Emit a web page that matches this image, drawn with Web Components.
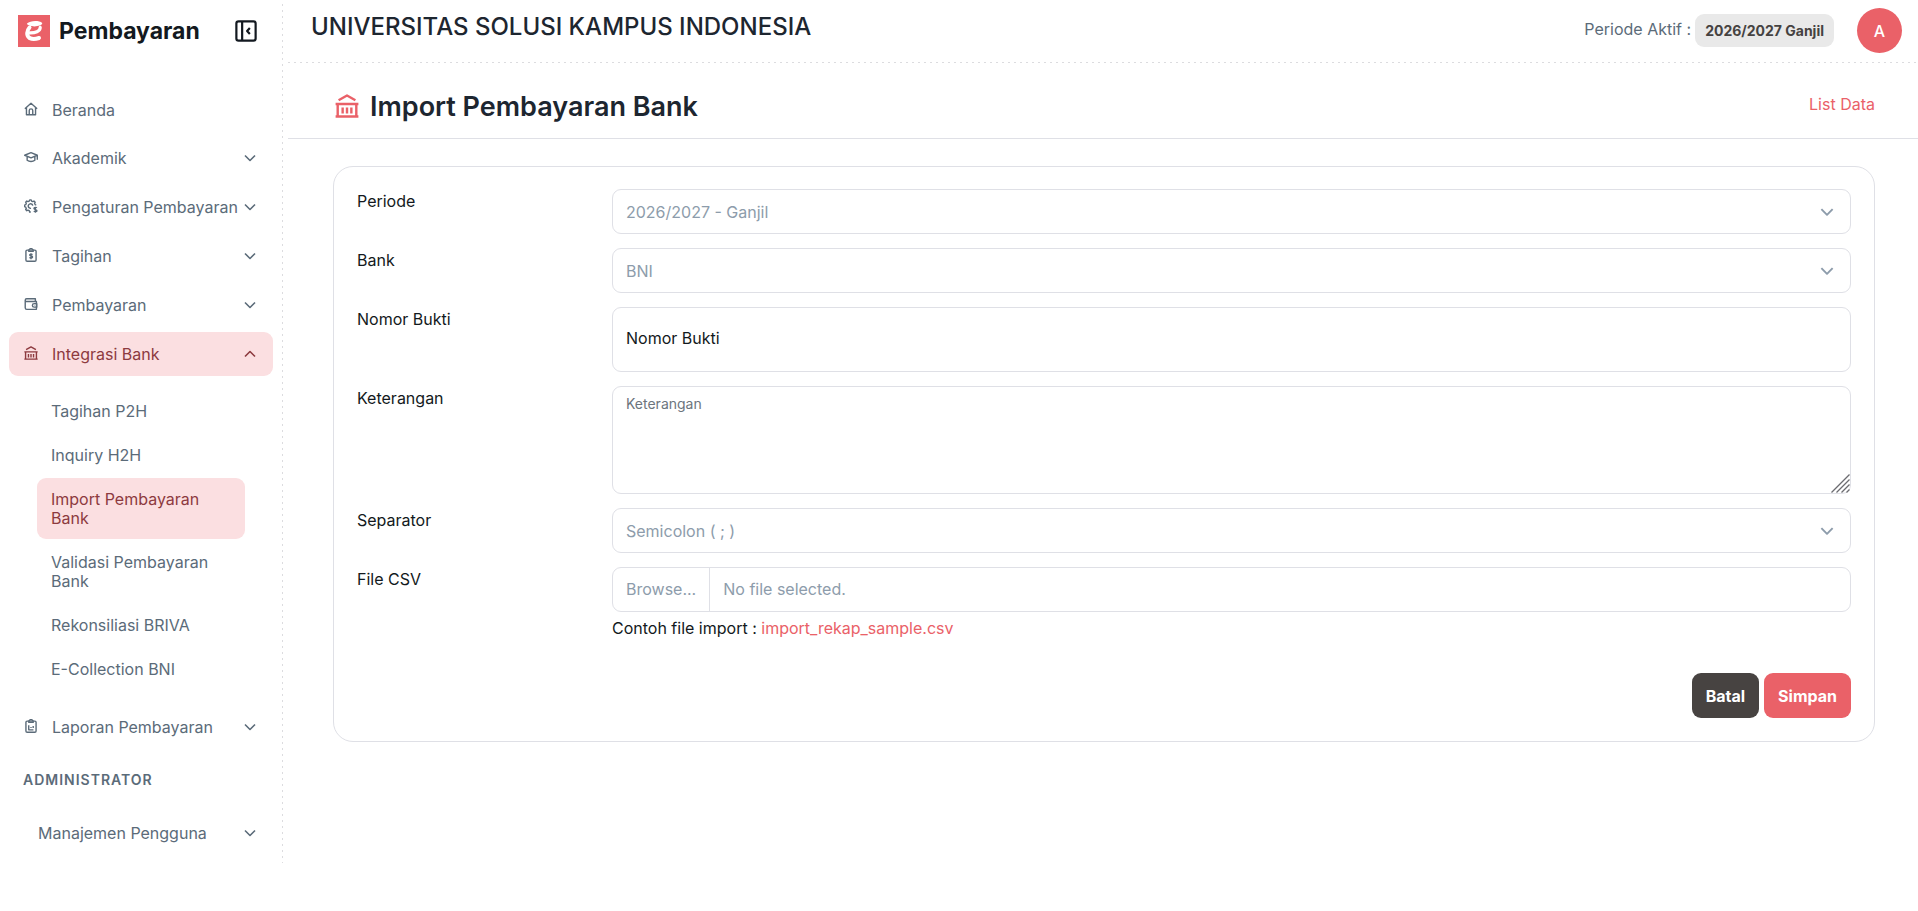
<!DOCTYPE html>
<html lang="id">
<head>
<meta charset="utf-8">
<title>Import Pembayaran Bank</title>
<style>
  :root {
    --font: Inter, "Liberation Sans", sans-serif;
    --brand: #ea6168;
    --brand-soft: #fbdfe1;
    --brand-deep: #8d3a3f;
    --ink: #1d2630;
    --ink-strong: #131920;
    --muted: #5b6b79;
    --placeholder: #8d9cab;
    --line: #dfe0e6;
  }
  body { margin: 0; background: #fff; color: var(--ink-strong); font: 16px/24px var(--font); }
</style>
</head>
<body>
<app-shell>
  <side-bar slot="sidebar">
    <side-item icon="home" leaf>Beranda</side-item>
    <side-item icon="cap">Akademik</side-item>
    <side-item icon="gear">Pengaturan Pembayaran</side-item>
    <side-item icon="bill">Tagihan</side-item>
    <side-item icon="wallet">Pembayaran</side-item>
    <side-item icon="bank" open>Integrasi Bank</side-item>
    <side-sub>
      <sub-item>Tagihan P2H</sub-item>
      <sub-item>Inquiry H2H</sub-item>
      <sub-item active>Import Pembayaran Bank</sub-item>
      <sub-item>Validasi Pembayaran Bank</sub-item>
      <sub-item>Rekonsiliasi BRIVA</sub-item>
      <sub-item>E-Collection BNI</sub-item>
    </side-sub>
    <side-item icon="report">Laporan Pembayaran</side-item>
    <side-caption>ADMINISTRATOR</side-caption>
    <side-item plain>Manajemen Pengguna</side-item>
  </side-bar>
  <top-bar period="2026/2027 Ganjil" initial="A">UNIVERSITAS SOLUSI KAMPUS INDONESIA</top-bar>
  <page-title icon="bank" link="List Data">Import Pembayaran Bank</page-title>
  <form-card>
    <select-field label="Periode" value="2026/2027 - Ganjil"></select-field>
    <select-field label="Bank" value="BNI"></select-field>
    <text-field label="Nomor Bukti"></text-field>
    <area-field label="Keterangan"></area-field>
    <select-field label="Separator" value="Semicolon ( ; )"></select-field>
    <file-field label="File CSV" sample="import_rekap_sample.csv"></file-field>
    <action-button slot="actions" tone="dark">Batal</action-button>
    <action-button slot="actions">Simpan</action-button>
  </form-card>
</app-shell>

<script>
const ICONS = {
  home: '<path d="M1 7.6 8 1.4l7 6.2M2.8 6.4v8.1h10.4V6.4M6 14.5V9.8a2 2 0 0 1 4 0v4.7"/>',
  cap: '<path d="M.8 6 8 3l7.200 3L8 9 .8 6zM3.600 7.400v4.400c2.400 1.900 6.400 1.900 8.800 0V7.400M15.200 6v5"/>',
  gear: '<path d="M14 6.800 12.800 6.500l-.7-1.600.7-1.300-1.400-1.300-1.300.7-1.500-.6L8.200 1H6.500l-.5 1.400-1.500.6-1.300-.7-1.300 1.300.7 1.300L2 6.500.6 7v1.800l1.400.5.6 1.500-.7 1.300 1.300 1.300 1.300-.7 1.500.6.4 1.600h1.400"/><path d="M10 7.600A2.600 2.600 0 1 0 8 10.600"/><path d="M14.600 10.200c-.4-.7-3.200-.9-3.200.7 0 1.700 3.400.7 3.400 2.400 0 1.500-3 1.400-3.500.4M13 9v6.600"/>',
  bill: '<rect x="2.200" y="2.400" width="11.600" height="12.800" rx="1.400"/><path d="M5.500 3.900V2.200L7 .8h2l1.500 1.400v1.700z"/><path d="M9.700 7.500c-.5-.8-3.200-.8-3.200.6 0 1.500 3.300.6 3.300 2.100 0 1.400-2.900 1.300-3.500.4M8 6v6.800"/>',
  report: '<rect x="2.200" y="2.400" width="11.600" height="12.800" rx="1.400"/><path d="M5.500 3.900V2.200L7 .8h2l1.500 1.400v1.700zM5.400 7v5.400h5.400M8 10.400V9M10.500 10.400V8"/>',
  wallet: '<path d="M13 5.200V2H3a1.600 1.600 0 0 0 0 3.200h11.200v8.900H3.200a1.800 1.800 0 0 1-1.800-1.800V3.600"/><path d="M14.600 7.600h-3a2 2 0 0 0 0 4h3zM11.600 9.600h.4"/>',
  bank: '<path d="M2.400 4.200 8 1l5.600 3.200M.4 6.700h15.200M1.800 6.700v8.100M14.200 6.700v8.100M.4 15h15.200M5.100 9v4M8 9v4M10.900 9v4"/>',
  down: '<path d="M3 5.500 8 10.500l5-5"/>',
  up: '<path d="M3 10.500 8 5.500l5 5"/>',
  collapse: '<rect x="1" y="1" width="14" height="14" rx="1.600"/><path d="M5.200 1v14M10.800 5.800 8.800 8l2 2.200"/>'
};
const icon = (name, size, stroke) =>
  `<svg width="${size}" height="${size}" viewBox="0 0 16 16" fill="none" stroke="currentColor" stroke-width="${stroke}" stroke-linejoin="round" aria-hidden="true">${ICONS[name]}</svg>`;

const BASE = ':host,*{box-sizing:border-box}svg{display:block;flex:none}button,input,select,textarea{font:inherit;color:inherit;margin:0}a{color:inherit;text-decoration:none}';

class Part extends HTMLElement {
  connectedCallback() {
    if (this.shadowRoot) return;
    this.attachShadow({ mode: 'open' }).innerHTML = `<style>:host{display:block}${BASE}${this.css()}</style>${this.html()}`;
  }
  css() { return ''; }
  html() { return '<slot></slot>'; }
  at(name) { return this.getAttribute(name) || ''; }
}

customElements.define('app-shell', class extends Part {
  css() { return `
    :host{display:grid;grid-template-columns:283px minmax(0,1fr);column-gap:5px;align-items:start}`; }
  html() { return '<slot name="sidebar"></slot><main><slot></slot></main>'; }
});

customElements.define('side-bar', class extends Part {
  css() { return `
    :host{padding:0 10px 8px 9px;background:repeating-linear-gradient(to bottom,#dcdcdf 0 2px,transparent 2px 6px) right 4px/1px 100% no-repeat}
    header{display:flex;align-items:center;height:62px;padding:0 16px 0 9px}
    strong{font-size:23px;line-height:28px;font-weight:700;margin-left:9px;flex:1}
    button{border:0;background:none;padding:0;color:var(--ink-strong)}
    nav{display:flex;flex-direction:column;gap:5px;padding-top:26px}`; }
  html() { return `
    <header>
      <svg width="32" height="32" viewBox="0 0 32 32" aria-hidden="true"><rect width="32" height="32" fill="var(--brand)"/>
        <path d="M9 8.600C12 5.600 21 5.200 24.200 8c.4 1-1.200 2.200-2.400 2.600-2.600 1-7.600 1-10 .2C10.400 10.400 8.800 9.600 9 8.600z" fill="#fff"/>
        <path d="M11.500 12.500C8.800 15.500 8 21 11.800 23.200c2.800 1.200 6.200.8 9.200-.2" fill="none" stroke="#fff" stroke-width="4" stroke-linecap="round"/>
        <path d="M22.200 12.400c.2 4-5 5.800-11.400 5.400" fill="none" stroke="#fff" stroke-width="3.200" stroke-linecap="round"/></svg>
      <strong>Pembayaran</strong>
      <button type="button" aria-label="Tutup menu">${icon('collapse', 22, 1.6)}</button>
    </header>
    <nav><slot></slot></nav>`; }
});

customElements.define('side-item', class extends Part {
  css() { return `
    .row{display:flex;align-items:center;width:100%;height:44px;border:0;border-radius:9px;background:none;
      padding:0 15px;color:var(--muted);text-align:left;font-size:16px;line-height:24px}
    a.row{height:43px}
    .row.plain{padding-left:29px}
    .row.open{background:var(--brand-soft);color:var(--brand-deep)}
    .text{flex:1;white-space:nowrap}
    .lead{margin-right:14px;padding-bottom:2px}`; }
  html() {
    const open = this.hasAttribute('open');
    const lead = this.at('icon') ? `<span class="lead">${icon(this.at('icon'), 14, 1.6)}</span>` : '';
    if (this.hasAttribute('leaf')) return `<a class="row" href="#">${lead}<span class="text"><slot></slot></span></a>`;
    return `<button type="button" aria-expanded="${open}" class="row ${open ? 'open' : ''} ${this.hasAttribute('plain') ? 'plain' : ''}">${lead}<span class="text"><slot></slot></span>${icon(open ? 'up' : 'down', 16, 1.6)}</button>`;
  }
});

customElements.define('side-sub', class extends Part {
  css() { return ':host{display:flex;flex-direction:column;gap:2px;padding:9px 28px 10px}'; }
});

customElements.define('sub-item', class extends Part {
  css() { return `
    a{display:block;padding:12px 14px 11px;border-radius:9px;line-height:19px;color:var(--muted)}
    :host([active]) a{background:var(--brand-soft);color:var(--brand-deep)}`; }
  html() { return '<a href="#"><slot></slot></a>'; }
});

customElements.define('side-caption', class extends Part {
  css() { return ':host{padding:15px 14px 16px;font-size:14px;line-height:21px;font-weight:600;letter-spacing:1px;color:var(--muted)}'; }
});

customElements.define('top-bar', class extends Part {
  css() { return `
    :host{display:flex;align-items:center;height:63px;padding:0 16px 2px 23px;
      background:repeating-linear-gradient(to right,#dcdcdf 0 2px,transparent 2px 6px) bottom/100% 1px no-repeat}
    h1{flex:1;margin:0;padding-bottom:8px;font-size:24px;line-height:28px;font-weight:500;color:var(--ink)}
    .period{color:var(--muted);padding-bottom:3px;margin-right:4px}
    .badge{padding:6px 10px;border-radius:9px;background:#e9e9e9;color:#454241;font-size:14px;line-height:21px;font-weight:700}
    button{margin-left:23px;width:45px;height:45px;border:0;border-radius:50%;background:var(--brand);color:#fff;font-weight:500;padding:0}`; }
  html() { return `<h1><slot></slot></h1><span class="period">Periode Aktif :</span><span class="badge">${this.at('period')}</span><button type="button">${this.at('initial')}</button>`; }
});

customElements.define('page-title', class extends Part {
  css() { return `
    :host{display:flex;align-items:center;height:76px;padding:0 43px 0 47px;border-bottom:1px solid var(--line)}
    svg{color:var(--brand);margin:10px 11px 0 0}
    h2{flex:1;margin:0;padding-top:12px;font-size:27px;line-height:36px;font-weight:600;color:var(--ink)}
    a{color:var(--brand);padding-top:6px}`; }
  html() { return `${icon(this.at('icon'), 24, 1.6)}<h2><slot></slot></h2><a href="#">${this.at('link')}</a>`; }
});

customElements.define('form-card', class extends Part {
  css() { return `
    form{display:flex;flex-direction:column;gap:14px;margin:27px 43px 27px 45px;padding:22px 23px 23px;border:1px solid var(--line);border-radius:20px}
    .actions{display:flex;justify-content:flex-end;gap:5px;padding-top:19px}`; }
  html() { return '<form><slot></slot><div class="actions"><slot name="actions"></slot></div></form>'; }
});

class Field extends Part {
  css() { return `
    :host{display:grid;grid-template-columns:255px minmax(0,1fr);align-items:start}
    .box{display:block;width:100%;height:45px;border:1px solid var(--line);border-radius:9px;background:#fff;padding:0 13px;outline:0}
    .stack{display:grid;align-items:center}
    .stack>*{grid-area:1/1}
    ${this.extra()}`; }
  extra() { return ''; }
  html() { return `<label for="f">${this.at('label')}</label>${this.control()}`; }
}

customElements.define('select-field', class extends Field {
  extra() { return `
    select{appearance:none;color:var(--placeholder)}
    svg{justify-self:end;margin-right:15px;color:var(--placeholder);pointer-events:none}`; }
  control() { return `<div class="stack"><select id="f" class="box"><option>${this.at('value')}</option></select>${icon('down', 18, 1.7)}</div>`; }
});

customElements.define('text-field', class extends Field {
  extra() { return `
    .box{height:65px;padding-bottom:4px}
    input::placeholder{color:var(--ink-strong);opacity:1}`; }
  control() { return `<input id="f" class="box" type="text" placeholder="${this.at('label')}">`; }
});

customElements.define('area-field', class extends Field {
  extra() { return `
    .box{height:108px;padding:7px 13px;resize:none;font-size:14px;line-height:20px}
    textarea::placeholder{color:#6c757d;opacity:1}
    svg{align-self:end;justify-self:end;margin:0 1px 1px 0;color:#6b6b70;pointer-events:none}`; }
  control() { return `<div class="stack"><textarea id="f" class="box" placeholder="${this.at('label')}"></textarea>
    <svg width="19" height="19" viewBox="0 0 19 19" fill="none" stroke="currentColor" stroke-width="1.300" aria-hidden="true"><path d="M.5 18.500 18.500.5M5.500 18.500l13-13M10.500 18.500l8-8M15.500 18.500l3-3"/></svg></div>`; }
});

customElements.define('file-field', class extends Field {
  extra() { return `
    .picker{display:flex;align-items:stretch;padding:0;color:var(--placeholder);line-height:43px;overflow:hidden;position:relative}
    .picker span{padding:0 13px}
    .picker span:first-of-type{border-right:1px solid var(--line)}
    input{position:absolute;inset:0;width:100%;opacity:0}
    p{margin:4px 0 0}
    p a{color:var(--brand)}`; }
  control() { return `<div><label class="box picker"><span>Browse...</span><span>No file selected.</span><input id="f" type="file" accept=".csv"></label>
    <p>Contoh file import : <a href="#">${this.at('sample')}</a></p></div>`; }
});

customElements.define('action-button', class extends Part {
  css() { return `
    button{height:45px;padding:0 14px;border:0;border-radius:9px;background:var(--brand);color:#fff;font-weight:700}
    :host([tone=dark]) button{background:#474341}`; }
  html() { return '<button type="button"><slot></slot></button>'; }
});
</script>
</body>
</html>
